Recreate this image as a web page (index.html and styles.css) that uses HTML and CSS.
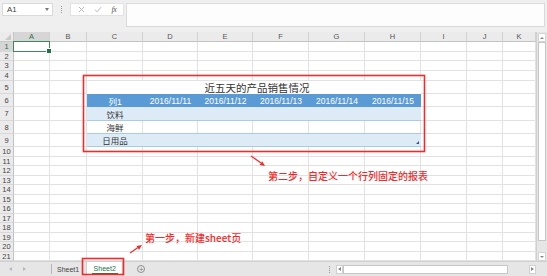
FILE: index.html
```html
<!DOCTYPE html>
<html lang="zh-CN">
<head>
    <meta charset="UTF-8">
    <meta name="viewport" content="width=device-width, initial-scale=1.0">
    <title>Sheet2 - 报表</title>
    <link rel="stylesheet" href="styles.css">
</head>
<body>
    <div class="app">
        <!-- Name box and formula bar -->
        <div class="formula-bar">
            <div class="name-box">
                <span>A1</span>
                <span class="caret"></span>
            </div>
            <div class="grip"><span></span></div>
            <div class="fx-box">
                <svg width="7" height="7" viewBox="0 0 7 7"><path d="M1 1 L6 6 M6 1 L1 6" stroke="#b9b9b9" stroke-width="1" fill="none"/></svg>
                <svg width="8" height="7" viewBox="0 0 8 7"><path d="M1 3.8 L3 5.8 L7 1.2" stroke="#b9b9b9" stroke-width="1" fill="none"/></svg>
                <i class="fx">fx</i>
            </div>
            <div class="formula-input"></div>
        </div>

        <!-- Worksheet -->
        <div class="sheet-wrap">
            <div class="grid" id="grid">
                <div class="corner"></div>
                <div class="selection"></div>

                <div class="report-title">近五天的产品销售情况</div>
                <div class="report">
                    <div class="report-row head">
                        <span>列1</span>
                        <span>2016/11/11</span>
                        <span>2016/11/12</span>
                        <span>2016/11/13</span>
                        <span>2016/11/14</span>
                        <span>2016/11/15</span>
                    </div>
                    <div class="report-row band"><span>饮料</span></div>
                    <div class="report-row"><span>海鲜</span></div>
                    <div class="report-row band"><span>日用品</span></div>
                </div>
            </div>
            <div class="vscroll">
                <div class="vs-btn"><span class="tri up"></span></div>
                <div class="vs-thumb"></div>
                <div class="vs-track"></div>
                <div class="vs-btn"><span class="tri down"></span></div>
            </div>
        </div>

        <!-- Sheet tabs -->
        <div class="tab-bar">
            <div class="tab-nav">
                <span class="tri left"></span>
                <span class="tri right"></span>
            </div>
            <div class="tab-sep"></div>
            <div class="tab">Sheet1</div>
            <div class="tab current"><span>Sheet2</span></div>
            <div class="add-sheet"><span>+</span></div>
            <div class="tab-space"></div>
            <div class="grip split"><span></span></div>
            <div class="hscroll">
                <div class="hs-btn"><span class="tri left"></span></div>
                <div class="hs-thumb"></div>
                <div class="hs-track"></div>
                <div class="hs-btn"><span class="tri right"></span></div>
            </div>
            <div class="tab-corner"></div>
        </div>

        <!-- Red callouts drawn over the screenshot -->
        <svg class="marks" width="547" height="276" viewBox="0 0 547 276">
            <rect x="83.5" y="75.5" width="341" height="76" fill="none" stroke="#f42a2a" stroke-width="1.6"/>
            <rect x="82.5" y="258.5" width="41" height="16" fill="none" stroke="#f42a2a" stroke-width="1.6"/>
            <line x1="251" y1="156" x2="261" y2="163" stroke="#f42a2a" stroke-width="1.2"/>
            <polygon points="265,166 259.6,165 262.2,161.2" fill="#f42a2a"/>
            <line x1="130" y1="253" x2="138" y2="247.5" stroke="#f42a2a" stroke-width="1.2"/>
            <polygon points="142,245 139.1,249.7 136.5,245.9" fill="#f42a2a"/>
        </svg>
        <div class="note note-two">第二步，自定义一个行列固定的报表</div>
        <div class="note note-one">第一步，新建sheet页</div>
    </div>

    <script>
        const columns = ['A', 'B', 'C', 'D', 'E', 'F', 'G', 'H', 'I', 'J', 'K'];
        const grid = document.getElementById('grid');

        columns.forEach((name, i) => {
            const head = document.createElement('div');
            head.className = 'col-head' + (i === 0 ? ' active' : '');
            head.textContent = name;
            head.style.gridArea = `1 / ${i + 2}`;
            grid.appendChild(head);
        });

        for (let r = 1; r <= 21; r++) {
            const head = document.createElement('div');
            head.className = 'row-head' + (r === 1 ? ' active' : '');
            head.textContent = r;
            head.style.gridArea = `${r + 1} / 1`;
            grid.appendChild(head);

            columns.forEach((name, i) => {
                const cell = document.createElement('div');
                cell.className = 'cell';
                cell.style.gridArea = `${r + 1} / ${i + 2}`;
                grid.appendChild(cell);
            });
        }
    </script>
</body>
</html>
```

FILE: styles.css
```css
* {
    margin: 0;
    padding: 0;
    box-sizing: border-box;
}

body {
    font-family: "Liberation Sans", "Noto Sans CJK SC", sans-serif;
    background-color: #fff;
    color: #333;
    width: 547px;
    height: 276px;
    overflow: hidden;
}

.app {
    position: relative;
    width: 547px;
    height: 276px;
    background-color: #efefef;
}

/* ---------- formula bar ---------- */

.formula-bar {
    display: flex;
    align-items: flex-start;
    height: 32px;
    padding: 3px 2px 0 2px;
    background-color: #efefef;
}

.name-box {
    width: 51px;
    height: 13px;
    display: flex;
    align-items: center;
    justify-content: space-between;
    padding: 0 3px 0 4px;
    background-color: #fff;
    border: 1px solid #dadada;
    font-size: 8px;
    color: #444;
}

.caret {
    width: 0;
    height: 0;
    border-left: 2.5px solid transparent;
    border-right: 2.5px solid transparent;
    border-top: 3px solid #777;
}

.grip {
    width: 17px;
    height: 13px;
    display: flex;
    align-items: center;
    justify-content: center;
}

.grip span {
    width: 0;
    height: 7px;
    border-left: 1px dotted #9a9a9a;
}

.fx-box {
    width: 54px;
    height: 13px;
    display: flex;
    align-items: center;
    justify-content: space-around;
    padding: 0 2px;
    background-color: #fff;
    border: 1px solid #e2e2e2;
}

.fx {
    font-family: "Liberation Serif", serif;
    font-size: 8px;
    color: #555;
    letter-spacing: -0.5px;
}

.formula-input {
    flex: 1;
    height: 24px;
    margin-left: 2px;
    background-color: #fdfdfd;
    border: 1px solid #dadada;
}

/* ---------- worksheet grid ---------- */

.sheet-wrap {
    display: flex;
    height: 229px;
}

.grid {
    display: grid;
    width: 536px;
    grid-template-columns: 14px 36px 37px 56px 55px 55px 56px 56px 56px 46px 36px 33px;
    grid-template-rows: 10px 10px 9px 10px 10px 13px 13px 14px 13px 13px repeat(6, 10px 9px);
    background-color: #fff;
    overflow: hidden;
}

.corner {
    grid-area: 1 / 1;
    position: relative;
    background-color: #ebebeb;
    border-right: 1px solid #c8c8c8;
    border-bottom: 1px solid #c8c8c8;
}

.corner::after {
    content: "";
    position: absolute;
    right: 2px;
    bottom: 1px;
    width: 0;
    height: 0;
    border-left: 6px solid transparent;
    border-bottom: 6px solid #c9c9c9;
}

.col-head {
    display: flex;
    align-items: center;
    justify-content: center;
    background-color: #ebebeb;
    border-right: 1px solid #d2d2d2;
    border-bottom: 1px solid #c3c3c3;
    font-size: 7.5px;
    color: #555;
}

.row-head {
    display: flex;
    align-items: center;
    justify-content: center;
    background-color: #ebebeb;
    border-right: 1px solid #c3c3c3;
    border-bottom: 1px solid #d8d8d8;
    font-size: 7.5px;
    color: #444;
}

.col-head.active,
.row-head.active {
    background-color: #d6d6d6;
    color: #2f6b45;
}

.cell {
    border-right: 1px solid #e2e2e2;
    border-bottom: 1px solid #e2e2e2;
}

.selection {
    grid-area: 2 / 2;
    z-index: 2;
    position: relative;
    margin: -1px 0 0 -1px;
    border: 1.5px solid #3f8a5c;
}

.selection::after {
    content: "";
    position: absolute;
    right: -3px;
    bottom: -3px;
    width: 4px;
    height: 4px;
    background-color: #217346;
    border: 1px solid #fff;
}

/* ---------- report table ---------- */

.report-title {
    grid-area: 6 / 4 / 7 / 10;
    z-index: 1;
    display: flex;
    align-items: center;
    justify-content: center;
    padding-left: 6px;
    background-color: #fff;
    font-size: 10.5px;
    color: #333;
}

.report {
    grid-area: 7 / 4 / 11 / 10;
    z-index: 1;
    position: relative;
    display: grid;
    grid-template-rows: 13px 14px 13px 13px;
    font-size: 8.5px;
    color: #333;
}

.report::after {
    content: "";
    position: absolute;
    right: 2px;
    bottom: 3px;
    width: 0;
    height: 0;
    border-left: 3px solid transparent;
    border-bottom: 3px solid #2f5597;
}

.report-row {
    display: grid;
    grid-template-columns: 56px 55px 55px 56px 56px 56px;
    align-items: center;
    text-align: center;
    border-bottom: 1px solid #a9cbea;
}

.report-row.head {
    background-color: #5b9bd5;
    color: #fff;
    font-size: 8.5px;
    border-bottom: none;
}

.report-row.band {
    background-color: #ddebf7;
}

/* ---------- vertical scrollbar ---------- */

.vscroll {
    width: 11px;
    display: flex;
    flex-direction: column;
    padding: 1px 1px 0 1px;
    background-color: #e6e6e6;
    border-left: 1px solid #d0d0d0;
}

.vs-btn {
    height: 9px;
    display: flex;
    align-items: center;
    justify-content: center;
    background-color: #fff;
    border: 1px solid #d4d4d4;
}

.vs-thumb {
    height: 199px;
    background-color: #fff;
    border: 1px solid #c6c6c6;
}

.vs-track {
    flex: 1;
}

.tri {
    width: 0;
    height: 0;
}

.tri.up {
    border-left: 2px solid transparent;
    border-right: 2px solid transparent;
    border-bottom: 2px solid #888;
}

.tri.down {
    border-left: 2px solid transparent;
    border-right: 2px solid transparent;
    border-top: 2px solid #888;
}

.tri.left {
    border-top: 2.5px solid transparent;
    border-bottom: 2.5px solid transparent;
    border-right: 3px solid #b8b8b8;
}

.tri.right {
    border-top: 2.5px solid transparent;
    border-bottom: 2.5px solid transparent;
    border-left: 3px solid #b8b8b8;
}

/* ---------- sheet tabs ---------- */

.tab-bar {
    display: flex;
    align-items: center;
    height: 15px;
    background-color: #e6e6e6;
    border-top: 1px solid #d0d0d0;
    font-size: 7px;
}

.tab-nav {
    width: 51px;
    display: flex;
    align-items: center;
    justify-content: center;
    gap: 11px;
    padding-right: 16px;
}

.tab-sep {
    width: 1px;
    height: 10px;
    background-color: #b5b5b5;
}

.tab {
    height: 14px;
    display: flex;
    align-items: center;
    padding: 0 6px 0 5px;
    color: #444;
}

.tab.current {
    width: 37px;
    margin-left: 1px;
    justify-content: center;
    padding: 0;
    background-color: #fff;
    color: #217346;
    border-left: 1px solid #cfcfcf;
    border-right: 1px solid #cfcfcf;
}

.tab.current span {
    padding: 0 2px 1px 2px;
    border-bottom: 1px solid #217346;
}

.add-sheet {
    width: 8px;
    height: 8px;
    margin-left: 14px;
    display: flex;
    align-items: center;
    justify-content: center;
    border: 1px solid #8f8f8f;
    border-radius: 50%;
    font-size: 7px;
    line-height: 1;
    color: #777;
}

.tab-space {
    flex: 1;
}

.grip.split {
    width: 14px;
    height: 10px;
}

.hscroll {
    width: 200px;
    height: 9px;
    display: flex;
    align-items: stretch;
}

.hs-btn {
    width: 7px;
    display: flex;
    align-items: center;
    justify-content: center;
    background-color: #fff;
    border: 1px solid #d0d0d0;
}

.hs-btn .tri.left {
    border-right-color: #888;
}

.hs-btn .tri.right {
    border-left-color: #888;
}

.hs-thumb {
    width: 165px;
    background-color: #fff;
    border: 1px solid #c6c6c6;
}

.hs-track {
    flex: 1;
}

.tab-corner {
    width: 11px;
}

/* ---------- red callouts ---------- */

.marks {
    position: absolute;
    left: 0;
    top: 0;
    pointer-events: none;
}

.note {
    position: absolute;
    font-family: "Noto Sans CJK SC", "Liberation Sans", sans-serif;
    font-size: 10px;
    font-weight: 500;
    line-height: 12px;
    color: #f42a2a;
    white-space: nowrap;
}

.note-two {
    left: 268px;
    top: 170px;
}

.note-one {
    left: 145px;
    top: 232px;
}
```
